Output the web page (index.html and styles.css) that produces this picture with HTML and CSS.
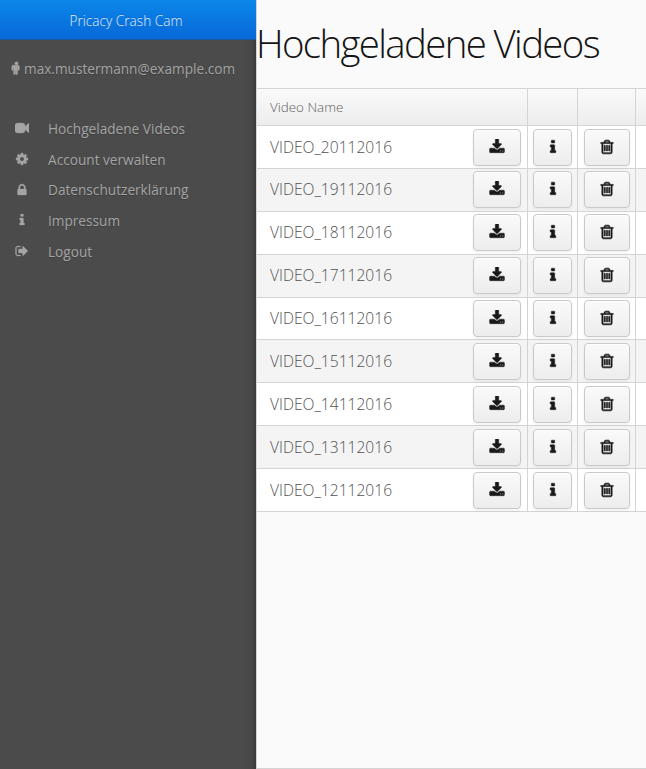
FILE: index.html
```html
<!DOCTYPE html>
<html lang="de">
<head>
<meta charset="utf-8">
<title>Pricacy Crash Cam</title>
<link rel="stylesheet" href="styles.css">
</head>
<body>
<svg class="defs" aria-hidden="true">
<symbol id="male" viewBox="0 0 1792 1792"><path d="M1280 704v416q0 40-28 68t-68 28-68-28-28-68v-352h-64v912q0 46-33 79t-79 33-79-33-33-79v-464h-64v464q0 46-33 79t-79 33-79-33-33-79v-912h-64v352q0 40-28 68t-68 28-68-28-28-68v-416q0-80 56-136t136-56h640q80 0 136 56t56 136zm-160-448q0 93-65.500 158.500t-158.500 65.500-158.500-65.500-65.500-158.500 65.500-158.500 158.500-65.500 158.500 65.500 65.500 158.500z"/></symbol>
<symbol id="video" viewBox="0 0 1792 1792"><path d="M1792 352v1088q0 42-39 59-13 5-25 5-27 0-45-19l-403-403v166q0 119-84.500 203.500t-203.500 84.500h-704q-119 0-203.500-84.500t-84.500-203.500v-704q0-119 84.500-203.500t203.500-84.500h704q119 0 203.500 84.500t84.500 203.500v165l403-402q18-19 45-19 12 0 25 5 39 17 39 59z"/></symbol>
<symbol id="cog" viewBox="0 0 1792 1792"><path d="M1152 896q0-106-75-181t-181-75-181 75-75 181 75 181 181 75 181-75 75-181zm512-109v222q0 12-8 23t-20 13l-185 28q-19 54-39 91 35 50 107 138 10 12 10 25t-9 23q-27 37-99 108t-94 71q-12 0-26-9l-138-108q-44 23-91 38-16 136-29 186-7 28-36 28h-222q-14 0-24.500-8.500t-11.500-21.500l-28-184q-49-16-90-37l-141 107q-10 9-25 9-14 0-25-11-126-114-165-168-7-10-7-23 0-12 8-23 15-21 51-66.500t54-70.500q-27-50-41-99l-183-27q-13-2-21-12.500t-8-23.500v-222q0-12 8-23t19-13l186-28q14-46 39-92-40-57-107-138-10-12-10-24 0-10 9-23 26-36 98.500-107.500t94.500-71.500q13 0 26 10l138 107q44-23 91-38 16-136 29-186 7-28 36-28h222q14 0 24.500 8.500t11.500 21.500l28 184q49 16 90 37l142-107q9-9 24-9 13 0 25 10 129 119 165 170 7 8 7 22 0 12-8 23-15 21-51 66.500t-54 70.500q26 50 41 98l183 28q13 2 21 12.500t8 23.500z"/></symbol>
<symbol id="lock" viewBox="0 0 1792 1792"><path d="M640 768h512v-192q0-106-75-181t-181-75-181 75-75 181v192zm832 96v576q0 40-28 68t-68 28h-960q-40 0-68-28t-28-68v-576q0-40 28-68t68-28h32v-192q0-184 132-316t316-132 316 132 132 316v192h32q40 0 68 28t28 68z"/></symbol>
<symbol id="info" viewBox="0 0 1792 1792"><path d="M1216 1344v128q0 26-19 45t-45 19h-512q-26 0-45-19t-19-45v-128q0-26 19-45t45-19h64v-384h-64q-26 0-45-19t-19-45v-128q0-26 19-45t45-19h384q26 0 45 19t19 45v576h64q26 0 45 19t19 45zm-128-1152v192q0 26-19 45t-45 19h-256q-26 0-45-19t-19-45v-192q0-26 19-45t45-19h256q26 0 45 19t19 45z"/></symbol>
<symbol id="logout" viewBox="0 0 1792 1792"><path d="M704 1440q0 4 1 20t.5 26.500-3 23.500-10 19.500-20.500 6.500h-320q-119 0-203.500-84.500t-84.500-203.500v-704q0-119 84.500-203.500t203.500-84.500h320q13 0 22.500 9.500t9.500 22.500q0 4 1 20t.5 26.500-3 23.500-10 19.500-20.500 6.500h-320q-66 0-113 47t-47 113v704q0 66 47 113t113 47h312l11.500 1 11.500 3 8 5.500 7 9 2 13.500zm928-544q0 26-19 45l-544 544q-19 19-45 19t-45-19-19-45v-288h-448q-26 0-45-19t-19-45v-384q0-26 19-45t45-19h448v-288q0-26 19-45t45-19 45 19l544 544q19 19 19 45z"/></symbol>
<symbol id="download" viewBox="0 0 1792 1792"><path d="M1344 1344q0-26-19-45t-45-19-45 19-19 45 19 45 45 19 45-19 19-45zm256 0q0-26-19-45t-45-19-45 19-19 45 19 45 45 19 45-19 19-45zm128-224v320q0 40-28 68t-68 28h-1472q-40 0-68-28t-28-68v-320q0-40 28-68t68-28h465l135 136q58 56 136 56t136-56l136-136h464q40 0 68 28t28 68zm-325-569q17 41-14 70l-448 448q-18 19-45 19t-45-19l-448-448q-31-29-14-70 17-39 59-39h256v-448q0-26 19-45t45-19h256q26 0 45 19t19 45v448h256q42 0 59 39z"/></symbol>
<symbol id="trash" viewBox="0 0 1792 1792"><path d="M704 736v576q0 14-9 23t-23 9h-64q-14 0-23-9t-9-23v-576q0-14 9-23t23-9h64q14 0 23 9t9 23zm256 0v576q0 14-9 23t-23 9h-64q-14 0-23-9t-9-23v-576q0-14 9-23t23-9h64q14 0 23 9t9 23zm256 0v576q0 14-9 23t-23 9h-64q-14 0-23-9t-9-23v-576q0-14 9-23t23-9h64q14 0 23 9t9 23zm128 724v-948h-896v948q0 22 7 40.500t14.500 27 10.500 8.500h832q3 0 10.500-8.500t14.500-27 7-40.500zm-672-1076h448l-48-117q-7-9-17-11h-317q-10 2-17 11zm928 32v64q0 14-9 23t-23 9h-96v948q0 83-47 143.500t-113 60.500h-832q-66 0-113-58.500t-47-141.500v-952h-96q-14 0-23-9t-9-23v-64q0-14 9-23t23-9h309l70-167q15-37 54-63t79-26h320q40 0 79 26t54 63l70 167h309q14 0 23 9t9 23z"/></symbol>
</svg>
<div class="app">
<aside class="sidebar">
<div class="brand">Pricacy Crash Cam</div>
<div class="user"><svg class="user-icon"><use href="#male"/></svg><span>max.mustermann@example.com</span></div>
<nav class="menu">
<a class="item"><svg class="icon"><use href="#video"/></svg><span>Hochgeladene Videos</span></a>
<a class="item"><svg class="icon"><use href="#cog"/></svg><span>Account verwalten</span></a>
<a class="item"><svg class="icon"><use href="#lock"/></svg><span>Datenschutzerklärung</span></a>
<a class="item"><svg class="icon"><use href="#info"/></svg><span>Impressum</span></a>
<a class="item"><svg class="icon"><use href="#logout"/></svg><span>Logout</span></a>
</nav>
</aside>
<main class="content">
<h1 class="title">Hochgeladene Videos</h1>
<div class="table" id="table">
<div class="row head"><div class="cell name">Video Name</div><div class="cell"></div><div class="cell"></div><div class="cell"></div></div>
</div>
</main>
</div>
<script src="table.js"></script>
</body>
</html>
```
FILE: styles.css
```css
* { box-sizing: border-box; }
html, body { margin: 0; height: 100%; overflow: hidden; }
body { font-family: "Open Sans", sans-serif; font-weight: 300; font-size: 15.6px; background: #fafafa; color: #525252; }
.defs { display: none; }
.app { display: flex; height: 100%; }
.sidebar {
  flex: none; width: 256px; color: #a4a4a4; font-size: 13.65px; font-weight: 400;
  background: linear-gradient(to left, #3c3c3c 0, #464646 4px, #4b4b4b 12px);
}
.brand {
  height: 40px; padding-right: 4px; text-align: center; line-height: 41px; font-weight: 300;
  color: #e6f1fb; text-shadow: 0 -1px 0 rgba(0, 60, 140, .3);
  background: linear-gradient(#0b87e9, #0868d9); border-bottom: 1px solid #1a5a9e;
}
.user { display: flex; align-items: center; height: 56px; padding-left: 10px; white-space: nowrap; text-shadow: 0 1px 0 #3d3d3d; }
.user-icon { width: 13px; height: 14px; fill: currentColor; stroke: currentColor; stroke-width: 80; margin-right: 1px; }
.menu { padding-top: 17px; }
.item { display: flex; align-items: center; height: 30.7px; padding-left: 15px; text-shadow: 0 1px 0 #3d3d3d; }
.icon { width: 14px; height: 14px; fill: currentColor; stroke: currentColor; stroke-width: 35; margin-right: 19px; }
.content { flex: 1; min-width: 0; overflow: hidden; border-left: 1px solid #d4d4d4; border-bottom: 1px solid #d4d4d4; }
.title { margin: 0 0 0 -1px; height: 88px; line-height: 87px; font-size: 38.4px; font-weight: 300; letter-spacing: -1.63px; color: #141414; white-space: nowrap; }
.table { border-top: 1px solid #d4d4d4; }
.row { display: grid; grid-template-columns: 271px 50px 58px 1fr; height: 42.9px; background: #fff; border-bottom: 1px solid #d4d4d4; }
.row:nth-child(odd) { background: #f4f4f4; }
.row.head { height: 37px; background: linear-gradient(#fafafa, #ededed); font-size: 13.4px; line-height: 34px; color: #606060; }
.cell { display: flex; align-items: flex-start; justify-content: center; padding-top: 2.6px; border-right: 1px solid #d4d4d4; }
.cell:last-child { border-right: 0; }
.name { justify-content: space-between; padding: 2.6px 6px 0 13px; }
.name span { line-height: 36px; }
.head .name { padding-top: 1px; }
.button {
  display: flex; align-items: center; justify-content: center; height: 37px; padding: 0;
  border: 1px solid #c9c9c9; border-radius: 4px; color: #191919;
  background: linear-gradient(#fafafa, #ededed);
  box-shadow: inset 0 1px 0 #fff, 0 2px 3px rgba(0, 0, 0, .05);
}
.button svg { width: 16px; height: 16px; margin-bottom: 1px; fill: currentColor; stroke: currentColor; stroke-width: 50; }
.button.download { width: 48px; }
.button.info { width: 39px; }
.button.trash { width: 46px; }
.button.trash svg { stroke-width: 70; }
```
FILE: table.js
```js
const table = document.getElementById('table');
const button = (name) => `<button class="button ${name}"><svg><use href="#${name}"/></svg></button>`;
for (let day = 20; day >= 12; day--) {
  table.insertAdjacentHTML('beforeend',
    `<div class="row"><div class="cell name"><span>VIDEO_${day}112016</span>${button('download')}</div>` +
    `<div class="cell">${button('info')}</div><div class="cell">${button('trash')}</div><div class="cell"></div></div>`);
}
```
